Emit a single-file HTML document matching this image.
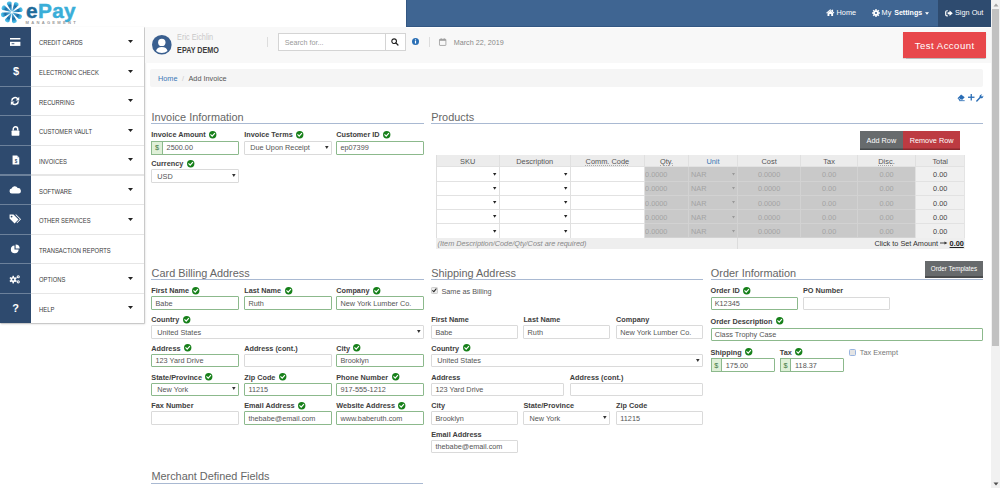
<!DOCTYPE html>
<html><head><meta charset="utf-8"><style>
html,body{margin:0;padding:0;width:1000px;height:488px;overflow:hidden;background:#fff;position:relative}
body{font-family:"Liberation Sans", sans-serif}
.t{position:absolute;white-space:nowrap;line-height:normal;font-family:"Liberation Sans", sans-serif}
svg{overflow:visible}
</style></head><body>
<svg style="position:absolute;left:0;top:0" width="25" height="26" viewBox="0 0 25 26"><defs><radialGradient id="pg" cx="11.8" cy="12.3" r="11" gradientUnits="userSpaceOnUse"><stop offset="0" stop-color="#a9dbf0"/><stop offset="0.25" stop-color="#4aa6d6"/><stop offset="0.62" stop-color="#1a6ca6"/><stop offset="0.85" stop-color="#3cb0df"/><stop offset="1" stop-color="#5cc4ea"/></radialGradient></defs><path d="M11.19 11.44 L7.88 5.52 L6.81 3.95 L7.26 2.26 L8.71 1.53 L10.33 1.38 L11.61 2.58 L11.53 4.47 L11.86 11.24 Z" fill="url(#pg)"/><path d="M11.98 11.26 L13.82 4.73 L14.17 2.87 L15.69 1.99 L17.23 2.50 L18.48 3.54 L18.54 5.29 L17.15 6.57 L12.59 11.60 Z" fill="url(#pg)"/><path d="M12.66 11.69 L18.58 8.38 L20.15 7.31 L21.84 7.76 L22.57 9.21 L22.72 10.83 L21.52 12.11 L19.63 12.03 L12.86 12.36 Z" fill="url(#pg)"/><path d="M12.84 12.48 L19.37 14.32 L21.23 14.67 L22.11 16.19 L21.60 17.73 L20.56 18.98 L18.81 19.04 L17.53 17.65 L12.50 13.09 Z" fill="url(#pg)"/><path d="M12.41 13.16 L15.72 19.08 L16.79 20.65 L16.34 22.34 L14.89 23.07 L13.27 23.22 L11.99 22.02 L12.07 20.13 L11.74 13.36 Z" fill="url(#pg)"/><path d="M11.62 13.34 L9.78 19.87 L9.43 21.73 L7.91 22.61 L6.37 22.10 L5.12 21.06 L5.06 19.31 L6.45 18.03 L11.01 13.00 Z" fill="url(#pg)"/><path d="M10.94 12.91 L5.02 16.22 L3.45 17.29 L1.76 16.84 L1.03 15.39 L0.88 13.77 L2.08 12.49 L3.97 12.57 L10.74 12.24 Z" fill="url(#pg)"/><path d="M10.76 12.12 L4.23 10.28 L2.37 9.93 L1.49 8.41 L2.00 6.87 L3.04 5.62 L4.79 5.56 L6.07 6.95 L11.10 11.51 Z" fill="url(#pg)"/></svg>
<div class="t" style="left:26px;top:-1px;font-size:20.8px;font-weight:700;letter-spacing:0.35px;line-height:23px;-webkit-text-stroke:0.45px currentColor"><span style="color:#1f6b9a">e</span><span style="color:#3aaed8">Pay</span></div>
<div class="t" style="left:25.5px;top:20px;font-size:4.1px;font-weight:700;letter-spacing:2.28px;color:#9a9a9a;line-height:5px">MANAGEMENT</div>
<div style="position:absolute;left:406px;top:0px;width:585px;height:26.6px;background:#3f6592;box-shadow:inset 1px -1px 0 #335783"></div>
<div style="position:absolute;left:937.5px;top:0px;width:53.5px;height:26.6px;background:#2e4b6f"></div>
<svg style="position:absolute;left:825.8px;top:8.9px" width="8.6" height="7.2" viewBox="0 0 17.2 14.4"><path d="M8.6 0.6 L0.4 7.6 L1.6 8.9 L8.6 3 L15.6 8.9 L16.8 7.6 Z" fill="#fff"/><path d="M3 8.2 L8.6 3.6 L14.2 8.2 L14.2 14 L10.4 14 L10.4 10 L6.8 10 L6.8 14 L3 14 Z" fill="#fff"/><rect x="11.8" y="1.4" width="2.4" height="4" fill="#fff"/></svg>
<div class="t" style="left:836.60px;top:8.49px;font-size:7.3px;font-weight:400;color:#fff;">Home</div>
<svg style="position:absolute;left:871.5px;top:8.6px" width="8" height="8" viewBox="0 0 16 16"><g fill="#fff"><circle cx="8" cy="8" r="5.2"/><rect x="6.4" y="0.3" width="3.2" height="4" transform="rotate(0 8 8)"/><rect x="6.4" y="0.3" width="3.2" height="4" transform="rotate(45 8 8)"/><rect x="6.4" y="0.3" width="3.2" height="4" transform="rotate(90 8 8)"/><rect x="6.4" y="0.3" width="3.2" height="4" transform="rotate(135 8 8)"/><rect x="6.4" y="0.3" width="3.2" height="4" transform="rotate(180 8 8)"/><rect x="6.4" y="0.3" width="3.2" height="4" transform="rotate(225 8 8)"/><rect x="6.4" y="0.3" width="3.2" height="4" transform="rotate(270 8 8)"/><rect x="6.4" y="0.3" width="3.2" height="4" transform="rotate(315 8 8)"/></g><circle cx="8" cy="8" r="2.1" fill="#3f6592"/></svg>
<div class="t" style="left:881.60px;top:8.49px;font-size:7.3px;font-weight:400;color:#fff;">My</div>
<div class="t" style="left:894.20px;top:8.67px;font-size:7.1px;font-weight:700;color:#fff;">Settings</div>
<svg style="position:absolute;left:925px;top:11.6px" width="4" height="3" viewBox="0 0 8 5"><path d="M0 0 L8 0 L4 5Z" fill="#fff"/></svg>
<svg style="position:absolute;left:944.8px;top:9.6px" width="8" height="6.6" viewBox="0 0 16 13.2"><path d="M5.6 1.5 L4 1.5 Q1.4 1.5 1.4 4 L1.4 9.2 Q1.4 11.7 4 11.7 L5.6 11.7" stroke="#fff" stroke-width="2.4" fill="none"/><path d="M5.2 4.6 L9 4.6 L9 1.2 L15.6 6.6 L9 12 L9 8.6 L5.2 8.6 Z" fill="#fff"/></svg>
<div class="t" style="left:955.00px;top:8.49px;font-size:7.3px;font-weight:400;color:#fff;">Sign Out</div>
<div style="position:absolute;left:0;top:27px;width:144px;height:296px;background:#fff;box-shadow:0.6px 0.6px 0 0.2px #c4c4c4, 0.8px 0.8px 2px rgba(0,0,0,0.18)"></div>
<div style="position:absolute;left:0px;top:27px;width:31px;height:296px;background:#2e4a6e"></div>
<div style="position:absolute;left:0;top:27.00px;width:31px;height:29.6px;display:flex;align-items:center;justify-content:center"><svg width="10.4" height="8" viewBox="0 0 20.8 16" style="margin-top:-0.4px"><rect x="0" y="0" width="20.8" height="3" fill="#fff"/><rect x="0" y="7.6" width="20.8" height="8.2" fill="#fff"/><rect x="3.2" y="10.6" width="5.5" height="1.8" fill="#2e4a6e"/></svg></div>
<div class="t" style="left:38.80px;top:38.62px;font-size:6.5px;font-weight:400;color:#3a3a3a;transform:scaleX(0.9);transform-origin:0 0;">CREDIT CARDS</div>
<svg style="position:absolute;left:127.5px;top:40.00px" width="5" height="3" viewBox="0 0 10 6"><path d="M0 0 L10 0 L5 6Z" fill="#222"/></svg>
<div style="position:absolute;left:0px;top:56.0px;width:31px;height:1.2px;background:#6c819b"></div>
<div style="position:absolute;left:31px;top:56.0px;width:113px;height:1.2px;background:#e6e6e6"></div>
<div style="position:absolute;left:0;top:56.60px;width:31px;height:29.6px;display:flex;align-items:center;justify-content:center"><svg width="6" height="10" viewBox="0 0 12 20" style="margin-top:0.6px"><text x="6" y="16.8" font-family="Liberation Sans" font-weight="700" font-size="22" fill="#fff" text-anchor="middle">$</text></svg></div>
<div class="t" style="left:38.80px;top:69.22px;font-size:6.5px;font-weight:400;color:#3a3a3a;transform:scaleX(0.9);transform-origin:0 0;">ELECTRONIC CHECK</div>
<svg style="position:absolute;left:127.5px;top:69.60px" width="5" height="3" viewBox="0 0 10 6"><path d="M0 0 L10 0 L5 6Z" fill="#222"/></svg>
<div style="position:absolute;left:0px;top:85.60000000000001px;width:31px;height:1.2px;background:#6c819b"></div>
<div style="position:absolute;left:31px;top:85.60000000000001px;width:113px;height:1.2px;background:#e6e6e6"></div>
<div style="position:absolute;left:0;top:86.20px;width:31px;height:29.6px;display:flex;align-items:center;justify-content:center"><svg width="10.08" height="10.08" viewBox="0 0 18 18"><path d="M3.2 8.5 A6 6 0 0 1 14 5.2" stroke="#fff" stroke-width="2.8" fill="none"/><path d="M16.5 1.5 L16.5 8 L10 8 Z" fill="#fff"/><path d="M14.8 9.5 A6 6 0 0 1 4 12.8" stroke="#fff" stroke-width="2.8" fill="none"/><path d="M1.5 16.5 L1.5 10 L8 10 Z" fill="#fff"/></svg></div>
<div class="t" style="left:38.80px;top:98.82px;font-size:6.5px;font-weight:400;color:#3a3a3a;transform:scaleX(0.9);transform-origin:0 0;">RECURRING</div>
<svg style="position:absolute;left:127.5px;top:99.20px" width="5" height="3" viewBox="0 0 10 6"><path d="M0 0 L10 0 L5 6Z" fill="#222"/></svg>
<div style="position:absolute;left:0px;top:115.20000000000002px;width:31px;height:1.2px;background:#6c819b"></div>
<div style="position:absolute;left:31px;top:115.20000000000002px;width:113px;height:1.2px;background:#e6e6e6"></div>
<div style="position:absolute;left:0;top:115.80px;width:31px;height:29.6px;display:flex;align-items:center;justify-content:center"><svg width="8.96" height="10.08" viewBox="0 0 16 18"><path d="M4 8 L4 5.5 A4 4 0 0 1 12 5.5 L12 8" stroke="#fff" stroke-width="2.6" fill="none"/><rect x="1" y="8" width="14" height="9.5" rx="1.2" fill="#fff"/></svg></div>
<div class="t" style="left:38.80px;top:128.42px;font-size:6.5px;font-weight:400;color:#3a3a3a;transform:scaleX(0.9);transform-origin:0 0;">CUSTOMER VAULT</div>
<svg style="position:absolute;left:127.5px;top:128.80px" width="5" height="3" viewBox="0 0 10 6"><path d="M0 0 L10 0 L5 6Z" fill="#222"/></svg>
<div style="position:absolute;left:0px;top:144.8px;width:31px;height:1.2px;background:#6c819b"></div>
<div style="position:absolute;left:31px;top:144.8px;width:113px;height:1.2px;background:#e6e6e6"></div>
<div style="position:absolute;left:0;top:145.40px;width:31px;height:29.6px;display:flex;align-items:center;justify-content:center"><svg width="7.84" height="10.08" viewBox="0 0 14 18"><path d="M1 1 L9 1 L13 5 L13 17 L1 17 Z" fill="#fff"/><path d="M9 1 L9 5 L13 5" fill="#c9d3df"/><text x="7" y="14.5" font-family="Liberation Sans" font-weight="700" font-size="8" fill="#2e4a6e" text-anchor="middle">$</text></svg></div>
<div class="t" style="left:38.80px;top:157.52px;font-size:6.5px;font-weight:400;color:#3a3a3a;transform:scaleX(0.9);transform-origin:0 0;">INVOICES</div>
<svg style="position:absolute;left:127.5px;top:158.40px" width="5" height="3" viewBox="0 0 10 6"><path d="M0 0 L10 0 L5 6Z" fill="#222"/></svg>
<div style="position:absolute;left:0px;top:174.4px;width:31px;height:1.2px;background:#6c819b"></div>
<div style="position:absolute;left:31px;top:174.4px;width:113px;height:1.2px;background:#e6e6e6"></div>
<div style="position:absolute;left:0;top:175.00px;width:31px;height:29.6px;display:flex;align-items:center;justify-content:center"><svg width="12.32" height="7.84" viewBox="0 0 22 14"><path d="M5 13.5 A4.5 4.5 0 0 1 4.6 4.6 A6 6 0 0 1 15.6 3.6 A5 5 0 0 1 17 13.5 Z" fill="#fff"/></svg></div>
<div class="t" style="left:38.80px;top:187.62px;font-size:6.5px;font-weight:400;color:#3a3a3a;transform:scaleX(0.9);transform-origin:0 0;">SOFTWARE</div>
<svg style="position:absolute;left:127.5px;top:188.00px" width="5" height="3" viewBox="0 0 10 6"><path d="M0 0 L10 0 L5 6Z" fill="#222"/></svg>
<div style="position:absolute;left:0px;top:204.00000000000003px;width:31px;height:1.2px;background:#6c819b"></div>
<div style="position:absolute;left:31px;top:204.00000000000003px;width:113px;height:1.2px;background:#e6e6e6"></div>
<div style="position:absolute;left:0;top:204.60px;width:31px;height:29.6px;display:flex;align-items:center;justify-content:center"><svg width="12.32" height="10.08" viewBox="0 0 22 18"><path d="M1 1 L8 1 L17 10 L10 17 L1 8 Z" fill="#fff"/><circle cx="4.6" cy="4.6" r="1.6" fill="#2e4a6e"/><path d="M11 1 L13 1 L21.5 9.5 L14.5 16.5 L13.5 15.5 L19.5 9.5 Z" fill="#fff"/></svg></div>
<div class="t" style="left:38.80px;top:217.22px;font-size:6.5px;font-weight:400;color:#3a3a3a;transform:scaleX(0.9);transform-origin:0 0;">OTHER SERVICES</div>
<svg style="position:absolute;left:127.5px;top:217.60px" width="5" height="3" viewBox="0 0 10 6"><path d="M0 0 L10 0 L5 6Z" fill="#222"/></svg>
<div style="position:absolute;left:0px;top:233.60000000000002px;width:31px;height:1.2px;background:#6c819b"></div>
<div style="position:absolute;left:31px;top:233.60000000000002px;width:113px;height:1.2px;background:#e6e6e6"></div>
<div style="position:absolute;left:0;top:234.20px;width:31px;height:29.6px;display:flex;align-items:center;justify-content:center"><svg width="10.08" height="10.08" viewBox="0 0 18 18"><path d="M8 2.5 A7 7 0 1 0 15.5 10 L8 10 Z" fill="#fff"/><path d="M10 0.8 A7.2 7.2 0 0 1 17.2 8 L10 8 Z" fill="#fff"/></svg></div>
<div class="t" style="left:38.80px;top:246.82px;font-size:6.5px;font-weight:400;color:#3a3a3a;transform:scaleX(0.9);transform-origin:0 0;">TRANSACTION REPORTS</div>
<div style="position:absolute;left:0px;top:263.2px;width:31px;height:1.2px;background:#6c819b"></div>
<div style="position:absolute;left:31px;top:263.2px;width:113px;height:1.2px;background:#e6e6e6"></div>
<div style="position:absolute;left:0;top:263.80px;width:31px;height:29.6px;display:flex;align-items:center;justify-content:center"><svg width="12.32" height="10.08" viewBox="0 0 22 18"><g fill="#fff"><circle cx="7.5" cy="10" r="4.6"/><rect x="6.1" y="3.2" width="2.8" height="3.4" transform="rotate(0 7.5 10)"/><rect x="6.1" y="3.2" width="2.8" height="3.4" transform="rotate(60 7.5 10)"/><rect x="6.1" y="3.2" width="2.8" height="3.4" transform="rotate(120 7.5 10)"/><rect x="6.1" y="3.2" width="2.8" height="3.4" transform="rotate(180 7.5 10)"/><rect x="6.1" y="3.2" width="2.8" height="3.4" transform="rotate(240 7.5 10)"/><rect x="6.1" y="3.2" width="2.8" height="3.4" transform="rotate(300 7.5 10)"/></g><circle cx="7.5" cy="10" r="1.8" fill="#2e4a6e"/><g fill="#fff"><circle cx="16.5" cy="5" r="2.8"/><circle cx="16.5" cy="14" r="2.8"/></g><circle cx="16.5" cy="5" r="1" fill="#2e4a6e"/><circle cx="16.5" cy="14" r="1" fill="#2e4a6e"/></svg></div>
<div class="t" style="left:38.80px;top:276.42px;font-size:6.5px;font-weight:400;color:#3a3a3a;transform:scaleX(0.9);transform-origin:0 0;">OPTIONS</div>
<svg style="position:absolute;left:127.5px;top:276.80px" width="5" height="3" viewBox="0 0 10 6"><path d="M0 0 L10 0 L5 6Z" fill="#222"/></svg>
<div style="position:absolute;left:0px;top:292.8px;width:31px;height:1.2px;background:#6c819b"></div>
<div style="position:absolute;left:31px;top:292.8px;width:113px;height:1.2px;background:#e6e6e6"></div>
<div style="position:absolute;left:0;top:293.40px;width:31px;height:29.6px;display:flex;align-items:center;justify-content:center"><svg width="7" height="10" viewBox="0 0 14 20" style="margin-top:0.4px"><text x="7" y="17.6" font-family="Liberation Sans" font-weight="700" font-size="22" fill="#fff" text-anchor="middle">?</text></svg></div>
<div class="t" style="left:38.80px;top:306.02px;font-size:6.5px;font-weight:400;color:#3a3a3a;transform:scaleX(0.9);transform-origin:0 0;">HELP</div>
<svg style="position:absolute;left:127.5px;top:306.40px" width="5" height="3" viewBox="0 0 10 6"><path d="M0 0 L10 0 L5 6Z" fill="#222"/></svg>
<div style="position:absolute;left:145px;top:26.5px;width:846px;height:36px;background:#f8f8f8"></div>
<div style="position:absolute;left:406px;top:26.6px;width:585px;height:1.3px;background:#fff"></div>
<svg style="position:absolute;left:151.9px;top:34.6px" width="19.6" height="19.6" viewBox="0 0 19.6 19.6"><circle cx="9.8" cy="9.8" r="9.8" fill="#3a5f8f"/><circle cx="9.8" cy="7.4" r="3.7" fill="#fff"/><path d="M4.1 15.9 Q4.9 12.1 9.8 12.0 Q14.7 12.1 15.5 15.9 Q13.1 18.0 9.8 18.0 Q6.5 18.0 4.1 15.9 Z" fill="#fff"/></svg>
<div class="t" style="left:177.10px;top:32.79px;font-size:7.3px;font-weight:400;color:#c8c8c8;transform:scaleY(1.12);transform-origin:0 90%;">Eric Eichlin</div>
<div class="t" style="left:177.10px;top:45.58px;font-size:7.2px;font-weight:700;color:#3d3d3d;transform:scaleY(1.15);transform-origin:0 90%;">EPAY DEMO</div>
<div style="position:absolute;left:267.4px;top:37px;width:1px;height:10px;background:#ddd"></div>
<div style="position:absolute;left:278.2px;top:33.2px;width:127.9px;height:17.4px;box-sizing:border-box;border:1px solid #d4d4d4;background:#fff"></div>
<div style="position:absolute;left:385.4px;top:33.2px;width:1px;height:17.4px;background:#d4d4d4"></div>
<div class="t" style="left:284.70px;top:38.08px;font-size:7.2px;font-weight:400;color:#999;">Search for...</div>
<svg style="position:absolute;left:391.4px;top:38.2px" width="7.6" height="7.6" viewBox="0 0 14 14"><circle cx="5.8" cy="5.8" r="4.3" stroke="#222" stroke-width="2.1" fill="none"/><path d="M9 9 L12.8 12.8" stroke="#222" stroke-width="2.4" stroke-linecap="round"/></svg>
<svg style="position:absolute;left:412px;top:38px" width="7" height="7" viewBox="0 0 14 14"><circle cx="7" cy="7" r="7" fill="#2a6fb5"/><circle cx="7" cy="3.8" r="1.3" fill="#fff"/><rect x="5.8" y="6" width="2.4" height="5" fill="#fff"/></svg>
<div style="position:absolute;left:429.3px;top:37px;width:1px;height:10px;background:#ddd"></div>
<svg style="position:absolute;left:439.4px;top:37.6px" width="7.4" height="8" viewBox="0 0 15 16"><rect x="1" y="2.5" width="13" height="12.5" rx="1" stroke="#999" stroke-width="1.6" fill="none"/><rect x="1" y="2.5" width="13" height="3" fill="#999"/><rect x="3.5" y="0.5" width="1.8" height="3" fill="#999"/><rect x="9.7" y="0.5" width="1.8" height="3" fill="#999"/></svg>
<div class="t" style="left:453.70px;top:38.08px;font-size:7.2px;font-weight:400;color:#888;">March 22, 2019</div>
<div style="position:absolute;left:903px;top:32.2px;width:82.7px;height:25.6px;background:#e8474b;box-shadow:0 0.5px 1px rgba(0,0,0,0.25)"></div>
<div class="t" style="left:914.80px;top:40.01px;font-size:9.6px;font-weight:400;color:#fff;letter-spacing:0.45px;">Test Account</div>
<div style="position:absolute;left:150px;top:69.2px;width:832.7px;height:17.6px;background:#f5f5f5;border-radius:2px"></div>
<div class="t" style="left:158.00px;top:74.19px;font-size:7.3px;font-weight:400;color:#3b78b5;">Home</div>
<div class="t" style="left:182.00px;top:74.19px;font-size:7.3px;font-weight:400;color:#ccc;">/</div>
<div class="t" style="left:188.50px;top:74.19px;font-size:7.3px;font-weight:400;color:#555;">Add Invoice</div>
<svg style="position:absolute;left:957px;top:93.8px" width="8.2" height="7.2" viewBox="0 0 16 14"><path d="M8 0.8 L15 6.5 L9.5 12 L4.5 12 L1 8.5 Z" fill="#2a6db5"/><path d="M3.5 7.8 L6.5 10.8 L9 10.8" stroke="#fff" stroke-width="1.4" fill="none"/><rect x="4" y="12.3" width="11" height="1.6" fill="#2a6db5"/></svg>
<svg style="position:absolute;left:967.6px;top:94px" width="6.5" height="6.5" viewBox="0 0 13 13"><rect x="5.2" y="0" width="2.6" height="13" fill="#2a6db5"/><rect x="0" y="5.2" width="13" height="2.6" fill="#2a6db5"/></svg>
<svg style="position:absolute;left:975.8px;top:93.6px" width="7.8" height="7.6" viewBox="0 0 16 16"><path d="M1.5 14.5 L8.5 7.5" stroke="#2a6db5" stroke-width="3" stroke-linecap="round"/><path d="M7.2 6.5 A4.6 4.6 0 0 1 13 1.2 L10.6 3.6 L11.2 5 L12.6 5.6 L15 3.2 A4.6 4.6 0 0 1 9.5 9 Z" fill="#2a6db5"/></svg>
<div class="t" style="left:151.60px;top:110.74px;font-size:10.9px;font-weight:400;color:#666;">Invoice Information</div>
<div style="position:absolute;left:151.29999999999998px;top:122.8px;width:273.1px;height:1px;background:#a9b9d2"></div>
<div class="t" style="left:431.20px;top:110.74px;font-size:10.9px;font-weight:400;color:#666;">Products</div>
<div style="position:absolute;left:430.9px;top:122.8px;width:552.0999999999999px;height:1px;background:#a9b9d2"></div>
<div class="t" style="left:151.60px;top:266.74px;font-size:10.9px;font-weight:400;color:#666;">Card Billing Address</div>
<div style="position:absolute;left:151.29999999999998px;top:278.8px;width:273.1px;height:1px;background:#a9b9d2"></div>
<div class="t" style="left:431.20px;top:266.74px;font-size:10.9px;font-weight:400;color:#666;">Shipping Address</div>
<div style="position:absolute;left:430.9px;top:278.8px;width:272.1px;height:1px;background:#a9b9d2"></div>
<div class="t" style="left:710.80px;top:266.74px;font-size:10.9px;font-weight:400;color:#666;">Order Information</div>
<div style="position:absolute;left:710.5px;top:278.8px;width:272.3px;height:1px;background:#a9b9d2"></div>
<div class="t" style="left:151.40px;top:470.44px;font-size:10.9px;font-weight:400;color:#666;">Merchant Defined Fields</div>
<div style="position:absolute;left:151.1px;top:482.5px;width:272.40000000000003px;height:1px;background:#a9b9d2"></div>
<div class="t" style="left:151.30px;top:130.49px;font-size:7.3px;font-weight:700;color:#404040;">Invoice Amount</div>
<svg width="7.4" height="7.4" viewBox="0 0 16 16" style="position:absolute;left:209.18px;top:130.80px"><circle cx="8" cy="8" r="8" fill="#17801a"/><path d="M4.2 8.3 L6.9 11 L11.9 5.6" stroke="#fff" stroke-width="2.6" fill="none" stroke-linecap="square"/></svg>
<div class="t" style="left:244.20px;top:130.49px;font-size:7.3px;font-weight:700;color:#404040;">Invoice Terms</div>
<svg width="7.4" height="7.4" viewBox="0 0 16 16" style="position:absolute;left:296.15px;top:130.80px"><circle cx="8" cy="8" r="8" fill="#17801a"/><path d="M4.2 8.3 L6.9 11 L11.9 5.6" stroke="#fff" stroke-width="2.6" fill="none" stroke-linecap="square"/></svg>
<div class="t" style="left:336.20px;top:130.49px;font-size:7.3px;font-weight:700;color:#404040;">Customer ID</div>
<svg width="7.4" height="7.4" viewBox="0 0 16 16" style="position:absolute;left:383.00px;top:130.80px"><circle cx="8" cy="8" r="8" fill="#17801a"/><path d="M4.2 8.3 L6.9 11 L11.9 5.6" stroke="#fff" stroke-width="2.6" fill="none" stroke-linecap="square"/></svg>
<div style="position:absolute;left:151.30px;top:141.00px;width:87.80px;height:13.60px;box-sizing:border-box;border:1px solid #8cb98c;background:#fff;border-radius:1px"></div>
<div style="position:absolute;left:151.30px;top:141.00px;width:11.6px;height:13.60px;box-sizing:border-box;border:1px solid #8cb98c;background:#dff0d8"></div>
<div class="t" style="left:155.00px;top:143.49px;font-size:7.3px;font-weight:400;color:#3c763d;">$</div>
<div class="t" style="left:166.60px;top:143.49px;font-size:7.3px;font-weight:400;color:#555;">2500.00</div>
<div style="position:absolute;left:244.20px;top:141.00px;width:87.80px;height:13.60px;box-sizing:border-box;border:1px solid #dadada;background:#fff;border-radius:1px"></div>
<div class="t" style="left:250.20px;top:143.49px;font-size:7.3px;font-weight:400;color:#555;">Due Upon Receipt</div>
<svg style="position:absolute;left:324.70px;top:145.80px" width="3.6" height="3" viewBox="0 0 6 5"><path d="M0 0 L6 0 L3 5Z" fill="#333"/></svg>
<div style="position:absolute;left:336.20px;top:141.00px;width:87.80px;height:13.60px;box-sizing:border-box;border:1px solid #8cb98c;background:#fff;border-radius:1px"></div>
<div class="t" style="left:340.40px;top:143.49px;font-size:7.3px;font-weight:400;color:#555;">ep07399</div>
<div class="t" style="left:151.30px;top:159.19px;font-size:7.3px;font-weight:700;color:#404040;">Currency</div>
<svg width="7.4" height="7.4" viewBox="0 0 16 16" style="position:absolute;left:186.75px;top:159.50px"><circle cx="8" cy="8" r="8" fill="#17801a"/><path d="M4.2 8.3 L6.9 11 L11.9 5.6" stroke="#fff" stroke-width="2.6" fill="none" stroke-linecap="square"/></svg>
<div style="position:absolute;left:151.30px;top:169.20px;width:87.80px;height:13.60px;box-sizing:border-box;border:1px solid #dadada;background:#fff;border-radius:1px"></div>
<div class="t" style="left:157.30px;top:171.69px;font-size:7.3px;font-weight:400;color:#555;">USD</div>
<svg style="position:absolute;left:231.80px;top:174.00px" width="3.6" height="3" viewBox="0 0 6 5"><path d="M0 0 L6 0 L3 5Z" fill="#333"/></svg>
<div class="t" style="left:151.30px;top:286.49px;font-size:7.3px;font-weight:700;color:#404040;">First Name</div>
<svg width="7.4" height="7.4" viewBox="0 0 16 16" style="position:absolute;left:192.43px;top:286.80px"><circle cx="8" cy="8" r="8" fill="#17801a"/><path d="M4.2 8.3 L6.9 11 L11.9 5.6" stroke="#fff" stroke-width="2.6" fill="none" stroke-linecap="square"/></svg>
<div class="t" style="left:244.20px;top:286.49px;font-size:7.3px;font-weight:700;color:#404040;">Last Name</div>
<svg width="7.4" height="7.4" viewBox="0 0 16 16" style="position:absolute;left:284.52px;top:286.80px"><circle cx="8" cy="8" r="8" fill="#17801a"/><path d="M4.2 8.3 L6.9 11 L11.9 5.6" stroke="#fff" stroke-width="2.6" fill="none" stroke-linecap="square"/></svg>
<div class="t" style="left:336.20px;top:286.49px;font-size:7.3px;font-weight:700;color:#404040;">Company</div>
<svg width="7.4" height="7.4" viewBox="0 0 16 16" style="position:absolute;left:372.86px;top:286.80px"><circle cx="8" cy="8" r="8" fill="#17801a"/><path d="M4.2 8.3 L6.9 11 L11.9 5.6" stroke="#fff" stroke-width="2.6" fill="none" stroke-linecap="square"/></svg>
<div style="position:absolute;left:151.30px;top:296.40px;width:87.80px;height:13.60px;box-sizing:border-box;border:1px solid #8cb98c;background:#fff;border-radius:1px"></div>
<div class="t" style="left:155.50px;top:298.89px;font-size:7.3px;font-weight:400;color:#555;">Babe</div>
<div style="position:absolute;left:244.20px;top:296.40px;width:87.80px;height:13.60px;box-sizing:border-box;border:1px solid #8cb98c;background:#fff;border-radius:1px"></div>
<div class="t" style="left:248.40px;top:298.89px;font-size:7.3px;font-weight:400;color:#555;">Ruth</div>
<div style="position:absolute;left:336.20px;top:296.40px;width:87.80px;height:13.60px;box-sizing:border-box;border:1px solid #8cb98c;background:#fff;border-radius:1px"></div>
<div class="t" style="left:340.40px;top:298.89px;font-size:7.3px;font-weight:400;color:#555;">New York Lumber Co.</div>
<div class="t" style="left:151.30px;top:315.19px;font-size:7.3px;font-weight:700;color:#404040;">Country</div>
<svg width="7.4" height="7.4" viewBox="0 0 16 16" style="position:absolute;left:182.68px;top:315.50px"><circle cx="8" cy="8" r="8" fill="#17801a"/><path d="M4.2 8.3 L6.9 11 L11.9 5.6" stroke="#fff" stroke-width="2.6" fill="none" stroke-linecap="square"/></svg>
<div style="position:absolute;left:151.30px;top:325.10px;width:272.90px;height:13.60px;box-sizing:border-box;border:1px solid #dadada;background:#fff;border-radius:1px"></div>
<div class="t" style="left:157.30px;top:327.59px;font-size:7.3px;font-weight:400;color:#555;">United States</div>
<svg style="position:absolute;left:416.90px;top:329.90px" width="3.6" height="3" viewBox="0 0 6 5"><path d="M0 0 L6 0 L3 5Z" fill="#333"/></svg>
<div class="t" style="left:151.30px;top:343.89px;font-size:7.3px;font-weight:700;color:#404040;">Address</div>
<svg width="7.4" height="7.4" viewBox="0 0 16 16" style="position:absolute;left:183.91px;top:344.20px"><circle cx="8" cy="8" r="8" fill="#17801a"/><path d="M4.2 8.3 L6.9 11 L11.9 5.6" stroke="#fff" stroke-width="2.6" fill="none" stroke-linecap="square"/></svg>
<div class="t" style="left:244.20px;top:343.89px;font-size:7.3px;font-weight:700;color:#404040;">Address (cont.)</div>
<div class="t" style="left:336.20px;top:343.89px;font-size:7.3px;font-weight:700;color:#404040;">City</div>
<svg width="7.4" height="7.4" viewBox="0 0 16 16" style="position:absolute;left:353.39px;top:344.20px"><circle cx="8" cy="8" r="8" fill="#17801a"/><path d="M4.2 8.3 L6.9 11 L11.9 5.6" stroke="#fff" stroke-width="2.6" fill="none" stroke-linecap="square"/></svg>
<div style="position:absolute;left:151.30px;top:353.80px;width:87.80px;height:13.60px;box-sizing:border-box;border:1px solid #8cb98c;background:#fff;border-radius:1px"></div>
<div class="t" style="left:155.50px;top:356.29px;font-size:7.3px;font-weight:400;color:#555;">123 Yard Drive</div>
<div style="position:absolute;left:244.20px;top:353.80px;width:87.80px;height:13.60px;box-sizing:border-box;border:1px solid #dadada;background:#fff;border-radius:1px"></div>
<div style="position:absolute;left:336.20px;top:353.80px;width:87.80px;height:13.60px;box-sizing:border-box;border:1px solid #8cb98c;background:#fff;border-radius:1px"></div>
<div class="t" style="left:340.40px;top:356.29px;font-size:7.3px;font-weight:400;color:#555;">Brooklyn</div>
<div class="t" style="left:151.30px;top:372.59px;font-size:7.3px;font-weight:700;color:#404040;">State/Province</div>
<svg width="7.4" height="7.4" viewBox="0 0 16 16" style="position:absolute;left:205.42px;top:372.90px"><circle cx="8" cy="8" r="8" fill="#17801a"/><path d="M4.2 8.3 L6.9 11 L11.9 5.6" stroke="#fff" stroke-width="2.6" fill="none" stroke-linecap="square"/></svg>
<div class="t" style="left:244.20px;top:372.59px;font-size:7.3px;font-weight:700;color:#404040;">Zip Code</div>
<svg width="7.4" height="7.4" viewBox="0 0 16 16" style="position:absolute;left:278.82px;top:372.90px"><circle cx="8" cy="8" r="8" fill="#17801a"/><path d="M4.2 8.3 L6.9 11 L11.9 5.6" stroke="#fff" stroke-width="2.6" fill="none" stroke-linecap="square"/></svg>
<div class="t" style="left:336.20px;top:372.59px;font-size:7.3px;font-weight:700;color:#404040;">Phone Number</div>
<svg width="7.4" height="7.4" viewBox="0 0 16 16" style="position:absolute;left:391.52px;top:372.90px"><circle cx="8" cy="8" r="8" fill="#17801a"/><path d="M4.2 8.3 L6.9 11 L11.9 5.6" stroke="#fff" stroke-width="2.6" fill="none" stroke-linecap="square"/></svg>
<div style="position:absolute;left:151.30px;top:382.50px;width:87.80px;height:13.60px;box-sizing:border-box;border:1px solid #8cb98c;background:#fff;border-radius:1px"></div>
<div class="t" style="left:157.30px;top:384.99px;font-size:7.3px;font-weight:400;color:#555;">New York</div>
<svg style="position:absolute;left:231.80px;top:387.30px" width="3.6" height="3" viewBox="0 0 6 5"><path d="M0 0 L6 0 L3 5Z" fill="#333"/></svg>
<div style="position:absolute;left:244.20px;top:382.50px;width:87.80px;height:13.60px;box-sizing:border-box;border:1px solid #8cb98c;background:#fff;border-radius:1px"></div>
<div class="t" style="left:248.40px;top:384.99px;font-size:7.3px;font-weight:400;color:#555;">11215</div>
<div style="position:absolute;left:336.20px;top:382.50px;width:87.80px;height:13.60px;box-sizing:border-box;border:1px solid #8cb98c;background:#fff;border-radius:1px"></div>
<div class="t" style="left:340.40px;top:384.99px;font-size:7.3px;font-weight:400;color:#555;">917-555-1212</div>
<div class="t" style="left:151.30px;top:401.29px;font-size:7.3px;font-weight:700;color:#404040;">Fax Number</div>
<div class="t" style="left:244.20px;top:401.29px;font-size:7.3px;font-weight:700;color:#404040;">Email Address</div>
<svg width="7.4" height="7.4" viewBox="0 0 16 16" style="position:absolute;left:298.04px;top:401.60px"><circle cx="8" cy="8" r="8" fill="#17801a"/><path d="M4.2 8.3 L6.9 11 L11.9 5.6" stroke="#fff" stroke-width="2.6" fill="none" stroke-linecap="square"/></svg>
<div class="t" style="left:336.20px;top:401.29px;font-size:7.3px;font-weight:700;color:#404040;">Website Address</div>
<svg width="7.4" height="7.4" viewBox="0 0 16 16" style="position:absolute;left:398.42px;top:401.60px"><circle cx="8" cy="8" r="8" fill="#17801a"/><path d="M4.2 8.3 L6.9 11 L11.9 5.6" stroke="#fff" stroke-width="2.6" fill="none" stroke-linecap="square"/></svg>
<div style="position:absolute;left:151.30px;top:411.20px;width:87.80px;height:13.60px;box-sizing:border-box;border:1px solid #dadada;background:#fff;border-radius:1px"></div>
<div style="position:absolute;left:244.20px;top:411.20px;width:87.80px;height:13.60px;box-sizing:border-box;border:1px solid #8cb98c;background:#fff;border-radius:1px"></div>
<div class="t" style="left:248.40px;top:413.69px;font-size:7.3px;font-weight:400;color:#555;">thebabe@email.com</div>
<div style="position:absolute;left:336.20px;top:411.20px;width:87.80px;height:13.60px;box-sizing:border-box;border:1px solid #8cb98c;background:#fff;border-radius:1px"></div>
<div class="t" style="left:340.40px;top:413.69px;font-size:7.3px;font-weight:400;color:#555;">www.baberuth.com</div>
<div style="position:absolute;left:431px;top:287.2px;width:6.9px;height:6.9px;box-sizing:border-box;border:0.8px solid #cfcfcf;background:#ececec;border-radius:1.2px"></div>
<svg style="position:absolute;left:432.2px;top:288.4px" width="4.8" height="4.6" viewBox="0 0 10 10"><path d="M1.2 5.6 L3.8 8 L8.8 1.8" stroke="#222" stroke-width="2.2" fill="none" stroke-linecap="round"/></svg>
<div class="t" style="left:441.40px;top:286.99px;font-size:7.3px;font-weight:400;color:#555;">Same as Billing</div>
<div class="t" style="left:431.20px;top:315.19px;font-size:7.3px;font-weight:700;color:#404040;">First Name</div>
<div class="t" style="left:523.40px;top:315.19px;font-size:7.3px;font-weight:700;color:#404040;">Last Name</div>
<div class="t" style="left:616.10px;top:315.19px;font-size:7.3px;font-weight:700;color:#404040;">Company</div>
<div style="position:absolute;left:431.20px;top:325.10px;width:86.90px;height:13.60px;box-sizing:border-box;border:1px solid #dadada;background:#fff;border-radius:1px"></div>
<div class="t" style="left:435.40px;top:327.59px;font-size:7.3px;font-weight:400;color:#555;">Babe</div>
<div style="position:absolute;left:523.40px;top:325.10px;width:86.90px;height:13.60px;box-sizing:border-box;border:1px solid #dadada;background:#fff;border-radius:1px"></div>
<div class="t" style="left:527.60px;top:327.59px;font-size:7.3px;font-weight:400;color:#555;">Ruth</div>
<div style="position:absolute;left:616.10px;top:325.10px;width:86.90px;height:13.60px;box-sizing:border-box;border:1px solid #dadada;background:#fff;border-radius:1px"></div>
<div class="t" style="left:620.30px;top:327.59px;font-size:7.3px;font-weight:400;color:#555;">New York Lumber Co.</div>
<div class="t" style="left:431.20px;top:343.89px;font-size:7.3px;font-weight:700;color:#404040;">Country</div>
<svg width="7.4" height="7.4" viewBox="0 0 16 16" style="position:absolute;left:462.58px;top:344.20px"><circle cx="8" cy="8" r="8" fill="#17801a"/><path d="M4.2 8.3 L6.9 11 L11.9 5.6" stroke="#fff" stroke-width="2.6" fill="none" stroke-linecap="square"/></svg>
<div style="position:absolute;left:431.20px;top:353.80px;width:271.80px;height:13.60px;box-sizing:border-box;border:1px solid #dadada;background:#fff;border-radius:1px"></div>
<div class="t" style="left:437.20px;top:356.29px;font-size:7.3px;font-weight:400;color:#555;">United States</div>
<svg style="position:absolute;left:695.70px;top:358.60px" width="3.6" height="3" viewBox="0 0 6 5"><path d="M0 0 L6 0 L3 5Z" fill="#333"/></svg>
<div class="t" style="left:431.20px;top:372.59px;font-size:7.3px;font-weight:700;color:#404040;">Address</div>
<div class="t" style="left:569.80px;top:372.59px;font-size:7.3px;font-weight:700;color:#404040;">Address (cont.)</div>
<div style="position:absolute;left:431.20px;top:382.50px;width:133.20px;height:13.60px;box-sizing:border-box;border:1px solid #dadada;background:#fff;border-radius:1px"></div>
<div class="t" style="left:435.40px;top:384.99px;font-size:7.3px;font-weight:400;color:#555;">123 Yard Drive</div>
<div style="position:absolute;left:569.80px;top:382.50px;width:133.20px;height:13.60px;box-sizing:border-box;border:1px solid #dadada;background:#fff;border-radius:1px"></div>
<div class="t" style="left:431.20px;top:401.29px;font-size:7.3px;font-weight:700;color:#404040;">City</div>
<div class="t" style="left:523.40px;top:401.29px;font-size:7.3px;font-weight:700;color:#404040;">State/Province</div>
<div class="t" style="left:616.10px;top:401.29px;font-size:7.3px;font-weight:700;color:#404040;">Zip Code</div>
<div style="position:absolute;left:431.20px;top:411.20px;width:86.90px;height:13.60px;box-sizing:border-box;border:1px solid #dadada;background:#fff;border-radius:1px"></div>
<div class="t" style="left:435.40px;top:413.69px;font-size:7.3px;font-weight:400;color:#555;">Brooklyn</div>
<div style="position:absolute;left:523.40px;top:411.20px;width:86.90px;height:13.60px;box-sizing:border-box;border:1px solid #dadada;background:#fff;border-radius:1px"></div>
<div class="t" style="left:529.40px;top:413.69px;font-size:7.3px;font-weight:400;color:#555;">New York</div>
<svg style="position:absolute;left:603.00px;top:416.00px" width="3.6" height="3" viewBox="0 0 6 5"><path d="M0 0 L6 0 L3 5Z" fill="#333"/></svg>
<div style="position:absolute;left:616.10px;top:411.20px;width:86.90px;height:13.60px;box-sizing:border-box;border:1px solid #dadada;background:#fff;border-radius:1px"></div>
<div class="t" style="left:620.30px;top:413.69px;font-size:7.3px;font-weight:400;color:#555;">11215</div>
<div class="t" style="left:431.20px;top:429.99px;font-size:7.3px;font-weight:700;color:#404040;">Email Address</div>
<div style="position:absolute;left:431.20px;top:439.90px;width:86.90px;height:13.60px;box-sizing:border-box;border:1px solid #dadada;background:#fff;border-radius:1px"></div>
<div class="t" style="left:435.40px;top:442.39px;font-size:7.3px;font-weight:400;color:#555;">thebabe@email.com</div>
<div style="position:absolute;left:925.3px;top:261.1px;width:57.5px;height:16.6px;background:#676a6c;box-shadow:inset 0 -2px 0 #4a4c4e"></div>
<div class="t" style="left:925.30px;top:265.40px;font-size:6.3px;font-weight:400;color:#fff;width:57.5px;text-align:center;">Order Templates</div>
<div class="t" style="left:710.50px;top:286.29px;font-size:7.3px;font-weight:700;color:#404040;">Order ID</div>
<svg width="7.4" height="7.4" viewBox="0 0 16 16" style="position:absolute;left:743.11px;top:286.60px"><circle cx="8" cy="8" r="8" fill="#17801a"/><path d="M4.2 8.3 L6.9 11 L11.9 5.6" stroke="#fff" stroke-width="2.6" fill="none" stroke-linecap="square"/></svg>
<div class="t" style="left:802.90px;top:286.29px;font-size:7.3px;font-weight:700;color:#404040;">PO Number</div>
<div style="position:absolute;left:710.50px;top:297.00px;width:87.30px;height:13.20px;box-sizing:border-box;border:1px solid #8cb98c;background:#fff;border-radius:1px"></div>
<div class="t" style="left:714.70px;top:299.49px;font-size:7.3px;font-weight:400;color:#555;">K12345</div>
<div style="position:absolute;left:802.90px;top:297.00px;width:86.80px;height:13.20px;box-sizing:border-box;border:1px solid #dadada;background:#fff;border-radius:1px"></div>
<div class="t" style="left:710.50px;top:316.99px;font-size:7.3px;font-weight:700;color:#404040;">Order Description</div>
<svg width="7.4" height="7.4" viewBox="0 0 16 16" style="position:absolute;left:775.96px;top:317.30px"><circle cx="8" cy="8" r="8" fill="#17801a"/><path d="M4.2 8.3 L6.9 11 L11.9 5.6" stroke="#fff" stroke-width="2.6" fill="none" stroke-linecap="square"/></svg>
<div style="position:absolute;left:710.50px;top:327.50px;width:272.00px;height:13.30px;box-sizing:border-box;border:1px solid #8cb98c;background:#fff;border-radius:1px"></div>
<div class="t" style="left:714.70px;top:329.99px;font-size:7.3px;font-weight:400;color:#555;">Class Trophy Case</div>
<div class="t" style="left:710.50px;top:347.79px;font-size:7.3px;font-weight:700;color:#404040;">Shipping</div>
<svg width="7.4" height="7.4" viewBox="0 0 16 16" style="position:absolute;left:745.12px;top:348.10px"><circle cx="8" cy="8" r="8" fill="#17801a"/><path d="M4.2 8.3 L6.9 11 L11.9 5.6" stroke="#fff" stroke-width="2.6" fill="none" stroke-linecap="square"/></svg>
<div class="t" style="left:779.80px;top:347.79px;font-size:7.3px;font-weight:700;color:#404040;">Tax</div>
<svg width="7.4" height="7.4" viewBox="0 0 16 16" style="position:absolute;left:795.24px;top:348.10px"><circle cx="8" cy="8" r="8" fill="#17801a"/><path d="M4.2 8.3 L6.9 11 L11.9 5.6" stroke="#fff" stroke-width="2.6" fill="none" stroke-linecap="square"/></svg>
<div style="position:absolute;left:710.50px;top:358.30px;width:64.10px;height:13.30px;box-sizing:border-box;border:1px solid #8cb98c;background:#fff;border-radius:1px"></div>
<div style="position:absolute;left:710.50px;top:358.30px;width:11.6px;height:13.30px;box-sizing:border-box;border:1px solid #8cb98c;background:#dff0d8"></div>
<div class="t" style="left:714.20px;top:360.79px;font-size:7.3px;font-weight:400;color:#3c763d;">$</div>
<div class="t" style="left:725.80px;top:360.79px;font-size:7.3px;font-weight:400;color:#555;">175.00</div>
<div style="position:absolute;left:779.80px;top:358.30px;width:64.10px;height:13.30px;box-sizing:border-box;border:1px solid #8cb98c;background:#fff;border-radius:1px"></div>
<div style="position:absolute;left:779.80px;top:358.30px;width:11.6px;height:13.30px;box-sizing:border-box;border:1px solid #8cb98c;background:#dff0d8"></div>
<div class="t" style="left:783.50px;top:360.79px;font-size:7.3px;font-weight:400;color:#3c763d;">$</div>
<div class="t" style="left:795.10px;top:360.79px;font-size:7.3px;font-weight:400;color:#555;">118.37</div>
<div style="position:absolute;left:849.2px;top:349.3px;width:7.2px;height:7px;box-sizing:border-box;border:1.2px solid #98b4e0;background:#e4e4e4;border-radius:1.5px"></div>
<div class="t" style="left:859.80px;top:347.59px;font-size:7.3px;font-weight:400;color:#777;">Tax Exempt</div>
<div style="position:absolute;left:860px;top:131.4px;width:42.6px;height:18.4px;background:#676b6d;box-shadow:inset 0 -1.5px 0 #45494b"></div>
<div style="position:absolute;left:902.6px;top:131.4px;width:57.8px;height:18.4px;background:#bd3b42;box-shadow:inset 0 -1.5px 0 #8a2a2f"></div>
<div class="t" style="left:860.00px;top:135.99px;font-size:7.3px;font-weight:400;color:#fff;width:42.8px;text-align:center;">Add Row</div>
<div class="t" style="left:902.80px;top:135.99px;font-size:7.3px;font-weight:400;color:#fff;width:57.6px;text-align:center;">Remove Row</div>
<div style="position:absolute;left:436.1px;top:155.3px;width:528.6999999999999px;height:11.599999999999994px;background:#ececec"></div>
<div class="t" style="left:436.10px;top:156.60px;font-size:7.4px;font-weight:400;color:#555;width:63.099999999999966px;text-align:center;">SKU</div>
<div class="t" style="left:499.20px;top:156.60px;font-size:7.4px;font-weight:400;color:#555;width:71.00000000000006px;text-align:center;">Description</div>
<div class="t" style="left:570.20px;top:156.60px;font-size:7.4px;font-weight:400;color:#555;width:74.29999999999995px;text-align:center;text-decoration:underline dotted #aaa;text-decoration-thickness:0.5px;text-underline-offset:1.2px;">Comm. Code</div>
<div class="t" style="left:644.50px;top:156.60px;font-size:7.4px;font-weight:400;color:#555;width:44.10000000000002px;text-align:center;text-decoration:underline dotted #aaa;text-decoration-thickness:0.5px;text-underline-offset:1.2px;">Qty.</div>
<div class="t" style="left:688.60px;top:156.60px;font-size:7.4px;font-weight:400;color:#3b78b5;width:48.799999999999955px;text-align:center;">Unit</div>
<div class="t" style="left:737.40px;top:156.60px;font-size:7.4px;font-weight:400;color:#555;width:63.39999999999998px;text-align:center;">Cost</div>
<div class="t" style="left:800.80px;top:156.60px;font-size:7.4px;font-weight:400;color:#555;width:56.60000000000002px;text-align:center;">Tax</div>
<div class="t" style="left:857.40px;top:156.60px;font-size:7.4px;font-weight:400;color:#555;width:58.200000000000045px;text-align:center;text-decoration:underline dotted #aaa;text-decoration-thickness:0.5px;text-underline-offset:1.2px;">Disc.</div>
<div class="t" style="left:915.60px;top:156.60px;font-size:7.4px;font-weight:400;color:#555;width:49.19999999999993px;text-align:center;">Total</div>
<div style="position:absolute;left:436.1px;top:166.9px;width:63.099999999999966px;height:14.599999999999994px;background:#fff"></div>
<div style="position:absolute;left:499.2px;top:166.9px;width:71.00000000000006px;height:14.599999999999994px;background:#fff"></div>
<div style="position:absolute;left:570.2px;top:166.9px;width:74.29999999999995px;height:14.599999999999994px;background:#fff"></div>
<div style="position:absolute;left:644.5px;top:166.9px;width:44.10000000000002px;height:14.599999999999994px;background:#c9c9c9"></div>
<div style="position:absolute;left:688.6px;top:166.9px;width:48.799999999999955px;height:14.599999999999994px;background:#c9c9c9"></div>
<div style="position:absolute;left:737.4px;top:166.9px;width:63.39999999999998px;height:14.599999999999994px;background:#c9c9c9"></div>
<div style="position:absolute;left:800.8px;top:166.9px;width:56.60000000000002px;height:14.599999999999994px;background:#c9c9c9"></div>
<div style="position:absolute;left:857.4px;top:166.9px;width:58.200000000000045px;height:14.599999999999994px;background:#c9c9c9"></div>
<div style="position:absolute;left:915.6px;top:166.9px;width:49.19999999999993px;height:14.599999999999994px;background:#f0f0f0"></div>
<svg style="position:absolute;left:492.60px;top:172.50px" width="3.4" height="2.8" viewBox="0 0 6 5"><path d="M0 0 L6 0 L3 5Z" fill="#222"/></svg>
<svg style="position:absolute;left:563.60px;top:172.50px" width="3.4" height="2.8" viewBox="0 0 6 5"><path d="M0 0 L6 0 L3 5Z" fill="#222"/></svg>
<div class="t" style="left:645.10px;top:169.89px;font-size:7.3px;font-weight:400;color:#a3a3a3;">0.0000</div>
<div class="t" style="left:691.00px;top:169.89px;font-size:7.3px;font-weight:400;color:#a3a3a3;">NAR</div>
<svg style="position:absolute;left:731.60px;top:172.70px" width="3" height="2.5" viewBox="0 0 6 5"><path d="M0 0 L6 0 L3 5Z" fill="#9a9a9a"/></svg>
<div class="t" style="left:737.40px;top:169.89px;font-size:7.3px;font-weight:400;color:#a3a3a3;width:63.39999999999998px;text-align:center;">0.0000</div>
<div class="t" style="left:800.80px;top:169.89px;font-size:7.3px;font-weight:400;color:#a3a3a3;width:56.60000000000002px;text-align:center;">0.00</div>
<div class="t" style="left:857.40px;top:169.89px;font-size:7.3px;font-weight:400;color:#a3a3a3;width:58.200000000000045px;text-align:center;">0.00</div>
<div class="t" style="left:915.60px;top:169.89px;font-size:7.3px;font-weight:400;color:#444;width:49.19999999999993px;text-align:center;">0.00</div>
<div style="position:absolute;left:436.1px;top:181.5px;width:63.099999999999966px;height:14.099999999999994px;background:#fff"></div>
<div style="position:absolute;left:499.2px;top:181.5px;width:71.00000000000006px;height:14.099999999999994px;background:#fff"></div>
<div style="position:absolute;left:570.2px;top:181.5px;width:74.29999999999995px;height:14.099999999999994px;background:#fff"></div>
<div style="position:absolute;left:644.5px;top:181.5px;width:44.10000000000002px;height:14.099999999999994px;background:#c9c9c9"></div>
<div style="position:absolute;left:688.6px;top:181.5px;width:48.799999999999955px;height:14.099999999999994px;background:#c9c9c9"></div>
<div style="position:absolute;left:737.4px;top:181.5px;width:63.39999999999998px;height:14.099999999999994px;background:#c9c9c9"></div>
<div style="position:absolute;left:800.8px;top:181.5px;width:56.60000000000002px;height:14.099999999999994px;background:#c9c9c9"></div>
<div style="position:absolute;left:857.4px;top:181.5px;width:58.200000000000045px;height:14.099999999999994px;background:#c9c9c9"></div>
<div style="position:absolute;left:915.6px;top:181.5px;width:49.19999999999993px;height:14.099999999999994px;background:#f0f0f0"></div>
<svg style="position:absolute;left:492.60px;top:187.10px" width="3.4" height="2.8" viewBox="0 0 6 5"><path d="M0 0 L6 0 L3 5Z" fill="#222"/></svg>
<svg style="position:absolute;left:563.60px;top:187.10px" width="3.4" height="2.8" viewBox="0 0 6 5"><path d="M0 0 L6 0 L3 5Z" fill="#222"/></svg>
<div class="t" style="left:645.10px;top:184.49px;font-size:7.3px;font-weight:400;color:#a3a3a3;">0.0000</div>
<div class="t" style="left:691.00px;top:184.49px;font-size:7.3px;font-weight:400;color:#a3a3a3;">NAR</div>
<svg style="position:absolute;left:731.60px;top:187.30px" width="3" height="2.5" viewBox="0 0 6 5"><path d="M0 0 L6 0 L3 5Z" fill="#9a9a9a"/></svg>
<div class="t" style="left:737.40px;top:184.49px;font-size:7.3px;font-weight:400;color:#a3a3a3;width:63.39999999999998px;text-align:center;">0.0000</div>
<div class="t" style="left:800.80px;top:184.49px;font-size:7.3px;font-weight:400;color:#a3a3a3;width:56.60000000000002px;text-align:center;">0.00</div>
<div class="t" style="left:857.40px;top:184.49px;font-size:7.3px;font-weight:400;color:#a3a3a3;width:58.200000000000045px;text-align:center;">0.00</div>
<div class="t" style="left:915.60px;top:184.49px;font-size:7.3px;font-weight:400;color:#444;width:49.19999999999993px;text-align:center;">0.00</div>
<div style="position:absolute;left:436.1px;top:195.6px;width:63.099999999999966px;height:14.200000000000017px;background:#fff"></div>
<div style="position:absolute;left:499.2px;top:195.6px;width:71.00000000000006px;height:14.200000000000017px;background:#fff"></div>
<div style="position:absolute;left:570.2px;top:195.6px;width:74.29999999999995px;height:14.200000000000017px;background:#fff"></div>
<div style="position:absolute;left:644.5px;top:195.6px;width:44.10000000000002px;height:14.200000000000017px;background:#c9c9c9"></div>
<div style="position:absolute;left:688.6px;top:195.6px;width:48.799999999999955px;height:14.200000000000017px;background:#c9c9c9"></div>
<div style="position:absolute;left:737.4px;top:195.6px;width:63.39999999999998px;height:14.200000000000017px;background:#c9c9c9"></div>
<div style="position:absolute;left:800.8px;top:195.6px;width:56.60000000000002px;height:14.200000000000017px;background:#c9c9c9"></div>
<div style="position:absolute;left:857.4px;top:195.6px;width:58.200000000000045px;height:14.200000000000017px;background:#c9c9c9"></div>
<div style="position:absolute;left:915.6px;top:195.6px;width:49.19999999999993px;height:14.200000000000017px;background:#f0f0f0"></div>
<svg style="position:absolute;left:492.60px;top:201.20px" width="3.4" height="2.8" viewBox="0 0 6 5"><path d="M0 0 L6 0 L3 5Z" fill="#222"/></svg>
<svg style="position:absolute;left:563.60px;top:201.20px" width="3.4" height="2.8" viewBox="0 0 6 5"><path d="M0 0 L6 0 L3 5Z" fill="#222"/></svg>
<div class="t" style="left:645.10px;top:198.59px;font-size:7.3px;font-weight:400;color:#a3a3a3;">0.0000</div>
<div class="t" style="left:691.00px;top:198.59px;font-size:7.3px;font-weight:400;color:#a3a3a3;">NAR</div>
<svg style="position:absolute;left:731.60px;top:201.40px" width="3" height="2.5" viewBox="0 0 6 5"><path d="M0 0 L6 0 L3 5Z" fill="#9a9a9a"/></svg>
<div class="t" style="left:737.40px;top:198.59px;font-size:7.3px;font-weight:400;color:#a3a3a3;width:63.39999999999998px;text-align:center;">0.0000</div>
<div class="t" style="left:800.80px;top:198.59px;font-size:7.3px;font-weight:400;color:#a3a3a3;width:56.60000000000002px;text-align:center;">0.00</div>
<div class="t" style="left:857.40px;top:198.59px;font-size:7.3px;font-weight:400;color:#a3a3a3;width:58.200000000000045px;text-align:center;">0.00</div>
<div class="t" style="left:915.60px;top:198.59px;font-size:7.3px;font-weight:400;color:#444;width:49.19999999999993px;text-align:center;">0.00</div>
<div style="position:absolute;left:436.1px;top:209.8px;width:63.099999999999966px;height:14.099999999999994px;background:#fff"></div>
<div style="position:absolute;left:499.2px;top:209.8px;width:71.00000000000006px;height:14.099999999999994px;background:#fff"></div>
<div style="position:absolute;left:570.2px;top:209.8px;width:74.29999999999995px;height:14.099999999999994px;background:#fff"></div>
<div style="position:absolute;left:644.5px;top:209.8px;width:44.10000000000002px;height:14.099999999999994px;background:#c9c9c9"></div>
<div style="position:absolute;left:688.6px;top:209.8px;width:48.799999999999955px;height:14.099999999999994px;background:#c9c9c9"></div>
<div style="position:absolute;left:737.4px;top:209.8px;width:63.39999999999998px;height:14.099999999999994px;background:#c9c9c9"></div>
<div style="position:absolute;left:800.8px;top:209.8px;width:56.60000000000002px;height:14.099999999999994px;background:#c9c9c9"></div>
<div style="position:absolute;left:857.4px;top:209.8px;width:58.200000000000045px;height:14.099999999999994px;background:#c9c9c9"></div>
<div style="position:absolute;left:915.6px;top:209.8px;width:49.19999999999993px;height:14.099999999999994px;background:#f0f0f0"></div>
<svg style="position:absolute;left:492.60px;top:215.40px" width="3.4" height="2.8" viewBox="0 0 6 5"><path d="M0 0 L6 0 L3 5Z" fill="#222"/></svg>
<svg style="position:absolute;left:563.60px;top:215.40px" width="3.4" height="2.8" viewBox="0 0 6 5"><path d="M0 0 L6 0 L3 5Z" fill="#222"/></svg>
<div class="t" style="left:645.10px;top:212.79px;font-size:7.3px;font-weight:400;color:#a3a3a3;">0.0000</div>
<div class="t" style="left:691.00px;top:212.79px;font-size:7.3px;font-weight:400;color:#a3a3a3;">NAR</div>
<svg style="position:absolute;left:731.60px;top:215.60px" width="3" height="2.5" viewBox="0 0 6 5"><path d="M0 0 L6 0 L3 5Z" fill="#9a9a9a"/></svg>
<div class="t" style="left:737.40px;top:212.79px;font-size:7.3px;font-weight:400;color:#a3a3a3;width:63.39999999999998px;text-align:center;">0.0000</div>
<div class="t" style="left:800.80px;top:212.79px;font-size:7.3px;font-weight:400;color:#a3a3a3;width:56.60000000000002px;text-align:center;">0.00</div>
<div class="t" style="left:857.40px;top:212.79px;font-size:7.3px;font-weight:400;color:#a3a3a3;width:58.200000000000045px;text-align:center;">0.00</div>
<div class="t" style="left:915.60px;top:212.79px;font-size:7.3px;font-weight:400;color:#444;width:49.19999999999993px;text-align:center;">0.00</div>
<div style="position:absolute;left:436.1px;top:223.9px;width:63.099999999999966px;height:13.900000000000006px;background:#fff"></div>
<div style="position:absolute;left:499.2px;top:223.9px;width:71.00000000000006px;height:13.900000000000006px;background:#fff"></div>
<div style="position:absolute;left:570.2px;top:223.9px;width:74.29999999999995px;height:13.900000000000006px;background:#fff"></div>
<div style="position:absolute;left:644.5px;top:223.9px;width:44.10000000000002px;height:13.900000000000006px;background:#c9c9c9"></div>
<div style="position:absolute;left:688.6px;top:223.9px;width:48.799999999999955px;height:13.900000000000006px;background:#c9c9c9"></div>
<div style="position:absolute;left:737.4px;top:223.9px;width:63.39999999999998px;height:13.900000000000006px;background:#c9c9c9"></div>
<div style="position:absolute;left:800.8px;top:223.9px;width:56.60000000000002px;height:13.900000000000006px;background:#c9c9c9"></div>
<div style="position:absolute;left:857.4px;top:223.9px;width:58.200000000000045px;height:13.900000000000006px;background:#c9c9c9"></div>
<div style="position:absolute;left:915.6px;top:223.9px;width:49.19999999999993px;height:13.900000000000006px;background:#f0f0f0"></div>
<svg style="position:absolute;left:492.60px;top:229.50px" width="3.4" height="2.8" viewBox="0 0 6 5"><path d="M0 0 L6 0 L3 5Z" fill="#222"/></svg>
<svg style="position:absolute;left:563.60px;top:229.50px" width="3.4" height="2.8" viewBox="0 0 6 5"><path d="M0 0 L6 0 L3 5Z" fill="#222"/></svg>
<div class="t" style="left:645.10px;top:226.89px;font-size:7.3px;font-weight:400;color:#a3a3a3;">0.0000</div>
<div class="t" style="left:691.00px;top:226.89px;font-size:7.3px;font-weight:400;color:#a3a3a3;">NAR</div>
<svg style="position:absolute;left:731.60px;top:229.70px" width="3" height="2.5" viewBox="0 0 6 5"><path d="M0 0 L6 0 L3 5Z" fill="#9a9a9a"/></svg>
<div class="t" style="left:737.40px;top:226.89px;font-size:7.3px;font-weight:400;color:#a3a3a3;width:63.39999999999998px;text-align:center;">0.0000</div>
<div class="t" style="left:800.80px;top:226.89px;font-size:7.3px;font-weight:400;color:#a3a3a3;width:56.60000000000002px;text-align:center;">0.00</div>
<div class="t" style="left:857.40px;top:226.89px;font-size:7.3px;font-weight:400;color:#a3a3a3;width:58.200000000000045px;text-align:center;">0.00</div>
<div class="t" style="left:915.60px;top:226.89px;font-size:7.3px;font-weight:400;color:#444;width:49.19999999999993px;text-align:center;">0.00</div>
<div style="position:absolute;left:436.1px;top:166.4px;width:528.6999999999999px;height:1px;background:#e2e2e2"></div>
<div style="position:absolute;left:436.1px;top:181.0px;width:528.6999999999999px;height:1px;background:#e2e2e2"></div>
<div style="position:absolute;left:436.1px;top:195.1px;width:528.6999999999999px;height:1px;background:#e2e2e2"></div>
<div style="position:absolute;left:436.1px;top:209.3px;width:528.6999999999999px;height:1px;background:#e2e2e2"></div>
<div style="position:absolute;left:436.1px;top:223.4px;width:528.6999999999999px;height:1px;background:#e2e2e2"></div>
<div style="position:absolute;left:644.5px;top:181.0px;width:271.1px;height:1px;background:#d2d2d2"></div>
<div style="position:absolute;left:644.5px;top:195.1px;width:271.1px;height:1px;background:#d2d2d2"></div>
<div style="position:absolute;left:644.5px;top:209.3px;width:271.1px;height:1px;background:#d2d2d2"></div>
<div style="position:absolute;left:644.5px;top:223.4px;width:271.1px;height:1px;background:#d2d2d2"></div>
<div style="position:absolute;left:644.5px;top:237.3px;width:271.1px;height:1px;background:#d2d2d2"></div>
<div style="position:absolute;left:498.7px;top:155.3px;width:1px;height:82.5px;background:#e0e0e0"></div>
<div style="position:absolute;left:569.7px;top:155.3px;width:1px;height:82.5px;background:#e0e0e0"></div>
<div style="position:absolute;left:644.0px;top:155.3px;width:1px;height:82.5px;background:#e0e0e0"></div>
<div style="position:absolute;left:688.1px;top:155.3px;width:1px;height:82.5px;background:#e0e0e0"></div>
<div style="position:absolute;left:736.9px;top:155.3px;width:1px;height:82.5px;background:#e0e0e0"></div>
<div style="position:absolute;left:800.3px;top:155.3px;width:1px;height:82.5px;background:#e0e0e0"></div>
<div style="position:absolute;left:856.9px;top:155.3px;width:1px;height:82.5px;background:#e0e0e0"></div>
<div style="position:absolute;left:915.1px;top:155.3px;width:1px;height:82.5px;background:#e0e0e0"></div>
<div style="position:absolute;left:688.1px;top:166.9px;width:1px;height:70.9px;background:#d2d2d2"></div>
<div style="position:absolute;left:736.9px;top:166.9px;width:1px;height:70.9px;background:#d2d2d2"></div>
<div style="position:absolute;left:800.3px;top:166.9px;width:1px;height:70.9px;background:#d2d2d2"></div>
<div style="position:absolute;left:856.9px;top:166.9px;width:1px;height:70.9px;background:#d2d2d2"></div>
<div style="position:absolute;left:435.6px;top:155.3px;width:1px;height:93.5px;background:#dedede"></div>
<div style="position:absolute;left:964.3px;top:155.3px;width:1px;height:93.5px;background:#e4e4e4"></div>
<div style="position:absolute;left:436.1px;top:237.8px;width:528.6999999999999px;height:11.0px;background:#eeeeee"></div>
<div style="position:absolute;left:736.9px;top:237.8px;width:1px;height:11.0px;background:#dcdcdc"></div>
<div class="t" style="left:437.60px;top:238.99px;font-size:7.3px;font-weight:400;color:#888;font-style:italic;">(Item Description/Code/Qty/Cost are required)</div>
<div class="t" style="left:737.40px;top:238.99px;font-size:7.3px;font-weight:400;color:#333;width:226.39999999999998px;text-align:right;">Click to Set Amount <svg width="7.4" height="4" viewBox="0 0 15 8" style="vertical-align:1px"><path d="M0 4 L10 4" stroke="#333" stroke-width="1.8"/><path d="M9 0.8 L15 4 L9 7.2 Z" fill="#333"/></svg> <b style="text-decoration:underline;color:#222">0.00</b></div>
<div style="position:absolute;left:991px;top:0px;width:9px;height:488px;background:#f1f1f1"></div>
<div style="position:absolute;left:992px;top:9px;width:6.5px;height:337px;background:#c1c1c1"></div>
<svg style="position:absolute;left:992.5px;top:2.5px" width="6" height="4" viewBox="0 0 6 4"><path d="M0.5 3.5 L3 0.5 L5.5 3.5Z" fill="#a3a3a3"/></svg>
<svg style="position:absolute;left:992.5px;top:481.5px" width="6" height="4" viewBox="0 0 6 4"><path d="M0.5 0.5 L3 3.5 L5.5 0.5Z" fill="#505050"/></svg>
</body></html>
